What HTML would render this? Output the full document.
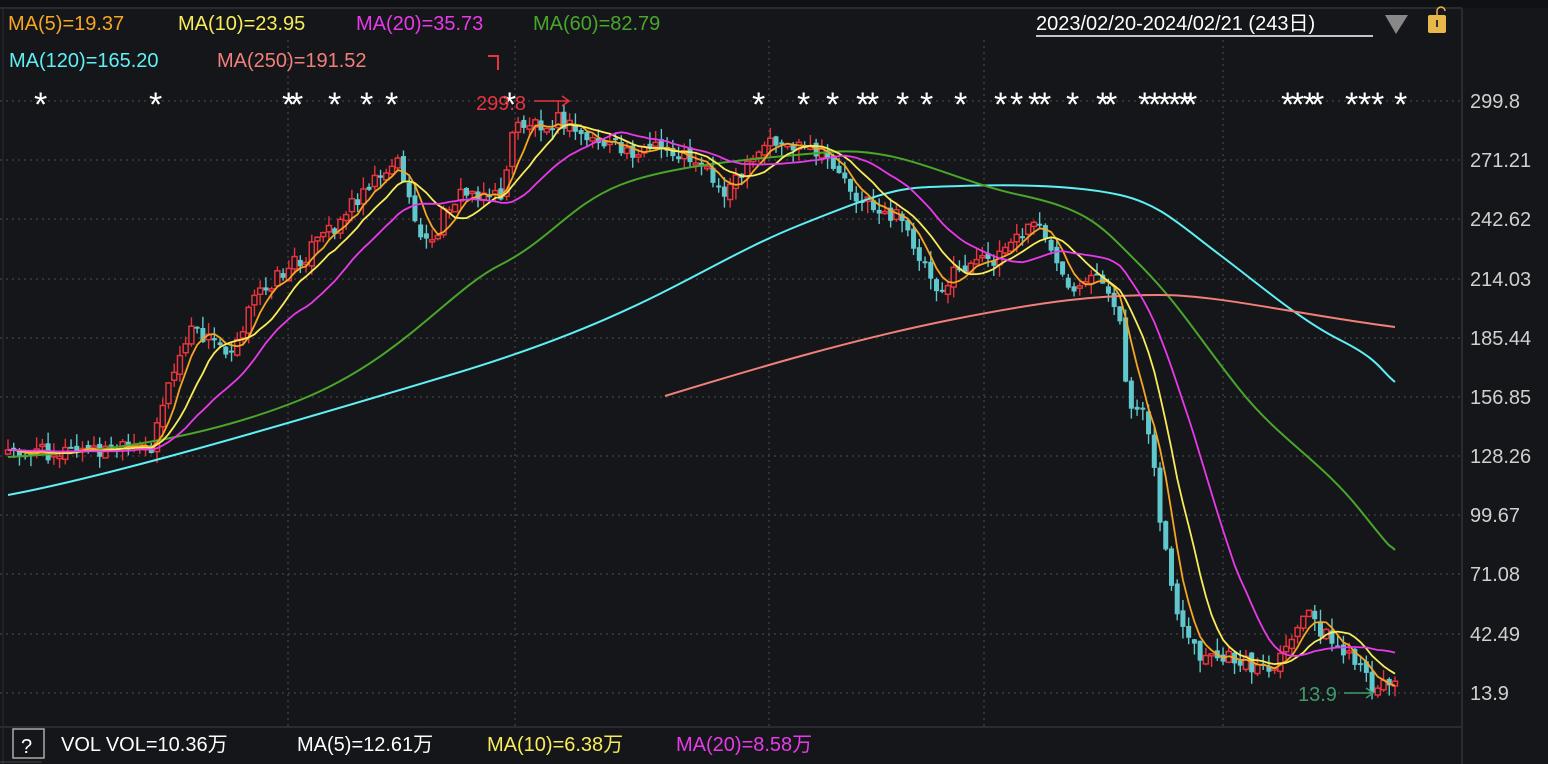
<!DOCTYPE html>
<html><head><meta charset="utf-8"><style>
html,body{margin:0;padding:0;background:#15161a;width:1548px;height:764px;overflow:hidden}
svg{display:block;font-family:"Liberation Sans","Noto Sans CJK SC",sans-serif}
</style></head><body>
<svg id="s" width="1548" height="764" viewBox="0 0 1548 764">
<rect width="1548" height="764" fill="#15161a"/>
<rect x="0" y="0" width="1548" height="8" fill="#101114"/>
<line x1="0" y1="8" x2="1462" y2="8" stroke="#2a2b30" stroke-width="2"/>
<line x1="1462" y1="8" x2="1462" y2="764" stroke="#2a2b30" stroke-width="2"/>
<line x1="0" y1="727" x2="1462" y2="727" stroke="#2a2b30" stroke-width="2"/>
<line x1="3" y1="8" x2="3" y2="764" stroke="#2a2b30" stroke-width="1"/>
<g stroke="#3a3b40" stroke-width="1.5" stroke-dasharray="2,4">
<line x1="0" y1="101" x2="1462" y2="101"/><line x1="0" y1="160" x2="1462" y2="160"/>
<line x1="0" y1="219" x2="1462" y2="219"/><line x1="0" y1="279" x2="1462" y2="279"/>
<line x1="0" y1="338" x2="1462" y2="338"/><line x1="0" y1="397" x2="1462" y2="397"/>
<line x1="0" y1="456" x2="1462" y2="456"/><line x1="0" y1="515" x2="1462" y2="515"/>
<line x1="0" y1="574" x2="1462" y2="574"/><line x1="0" y1="634" x2="1462" y2="634"/>
<line x1="0" y1="693" x2="1462" y2="693"/>
<line x1="288" y1="40" x2="288" y2="727"/><line x1="515" y1="40" x2="515" y2="727"/>
<line x1="769" y1="40" x2="769" y2="727"/><line x1="984" y1="40" x2="984" y2="727"/>
<line x1="1223" y1="40" x2="1223" y2="727"/>
</g>
<g id="candles"></g>
<g fill="none" stroke-width="2" stroke-linejoin="round">
<path stroke="#5ff0f5" d="M8,495 C100,478 250,435 450,375 S700,265 800,225 S900,188 960,186 S1080,186 1120,195 S1180,225 1220,255 S1300,320 1340,340 S1380,370 1395,382"/>
<path stroke="#4aa62a" d="M8,457 C100,452 200,440 300,400 S450,290 500,265 S570,205 620,185 S760,158 830,152 S950,180 1020,195 S1100,225 1140,265 S1200,340 1240,390 S1320,460 1360,510 S1385,540 1395,550"/>
<path stroke="#f08078" d="M665,396 C750,370 850,340 950,320 S1100,295 1160,295 S1300,315 1395,327"/>
</g>
<g id="mas" fill="none" stroke-width="1.8" stroke-linejoin="round"></g>
<g font-size="20">
<text x="8" y="30" fill="#f5a623">MA(5)=19.37</text>
<text x="178" y="30" fill="#f8ec5a">MA(10)=23.95</text>
<text x="356" y="30" fill="#e83ae8">MA(20)=35.73</text>
<text x="533" y="30" fill="#4aa62a">MA(60)=82.79</text>
<text x="9" y="67" fill="#5ff0f5">MA(120)=165.20</text>
<text x="217" y="67" fill="#f08078">MA(250)=191.52</text>
<text x="1036" y="30" fill="#fff">2023/02/20-2024/02/21 (243日)</text>
</g>
<line x1="1036" y1="36" x2="1373" y2="36" stroke="#fff" stroke-width="1.5"/>
<polygon points="1385,15 1408,15 1396,34" fill="#888"/>
<rect x="1428" y="15" width="18" height="18" rx="2" fill="#e8b84a"/>
<path d="M1437,15 v-4 a4,4 0 0 1 8,0" stroke="#e8b84a" stroke-width="1.5" fill="none"/>
<rect x="1436" y="20" width="2" height="7" fill="#333"/>
<g font-size="20" fill="#d0d0d0">
<text x="1470" y="108">299.8</text><text x="1470" y="167">271.21</text>
<text x="1470" y="226">242.62</text><text x="1470" y="286">214.03</text>
<text x="1470" y="345">185.44</text><text x="1470" y="404">156.85</text>
<text x="1470" y="463">128.26</text><text x="1470" y="522">99.67</text>
<text x="1470" y="581">71.08</text><text x="1470" y="641">42.49</text>
<text x="1470" y="700">13.9</text>
</g>
<g font-size="34" fill="#fff" id="stars"></g>
<text x="476" y="110" font-size="20" fill="#e8343d">299.8</text>
<path d="M534,101 H568 M562,96 L569,101 L562,106" stroke="#e8343d" stroke-width="1.5" fill="none"/>
<path d="M488,56 H498 V70" stroke="#e8343d" stroke-width="2" fill="none"/>
<text x="1298" y="701" font-size="20" fill="#3f9a6a">13.9</text>
<path d="M1344,693 H1372 M1366,688 L1373,693 L1366,698" stroke="#3f9a6a" stroke-width="1.5" fill="none"/>
<rect x="13" y="729" width="31" height="29" fill="none" stroke="#aaa" stroke-width="1.5"/>
<text x="21" y="753" font-size="20" fill="#fff">?</text>
<line x1="0" y1="762" x2="42" y2="762" stroke="#444" stroke-width="1"/>
<g font-size="20">
<text x="61" y="751" fill="#fff">VOL  VOL=10.36万</text>
<text x="297" y="751" fill="#fff">MA(5)=12.61万</text>
<text x="487" y="751" fill="#f8ec5a">MA(10)=6.38万</text>
<text x="676" y="751" fill="#e83ae8">MA(20)=8.58万</text>
</g>
</svg>
<script>
(function(){
var NS="http://www.w3.org/2000/svg";
var K=[[8,452],[150,450],[160,410],[190,330],[230,350],[260,290],[300,260],[340,220],[370,180],[400,160],[410,210],[430,250],[450,200],[480,190],[500,200],[515,125],[560,120],[580,135],[620,150],[660,150],[700,160],[720,190],[740,180],[770,140],[800,150],[830,160],[860,200],[900,220],[940,290],[960,270],[990,260],[1040,220],[1060,280],[1075,300],[1100,270],[1120,330],[1130,410],[1145,400],[1160,520],[1180,630],[1200,660],[1240,660],[1275,675],[1290,640],[1310,615],[1330,640],[1350,660],[1370,685],[1395,683]];
function f(x){for(var i=1;i<K.length;i++){if(x<=K[i][0]){var a=K[i-1],b=K[i];return a[1]+(b[1]-a[1])*(x-a[0])/(b[0]-a[0]);}}return K[K.length-1][1];}
function r(i){var v=Math.sin(i*12.9898+4.1)*43758.5453;return v-Math.floor(v);}
var g=document.getElementById("candles"),N=243,cl=[],xs=[];
var prev=f(8);
for(var i=0;i<N;i++){
 var x=8+i*(1387/(N-1));xs.push(x);
 var c=f(x)+(r(i)-0.5)*18;cl.push(c);
 var o=prev+(r(i+500)-0.5)*8;
 var hi=Math.min(o,c)-r(i+900)*12,lo=Math.max(o,c)+r(i+1300)*12;
 var up=c<o;var col=up?"#e8343d":"#5fc8cc";
 var l=document.createElementNS(NS,"line");
 l.setAttribute("x1",x);l.setAttribute("x2",x);l.setAttribute("y1",hi);l.setAttribute("y2",lo);
 l.setAttribute("stroke",col);l.setAttribute("stroke-width","1.4");g.appendChild(l);
 var rc=document.createElementNS(NS,"rect");
 var t=Math.min(o,c),h=Math.max(2,Math.abs(o-c));
 rc.setAttribute("x",x-2.5);rc.setAttribute("y",t);rc.setAttribute("width",5);rc.setAttribute("height",h);
 if(up){rc.setAttribute("fill","#15161a");rc.setAttribute("stroke",col);rc.setAttribute("stroke-width","1.5");}
 else rc.setAttribute("fill",col);
 g.appendChild(rc);prev=c;
}
var m=document.getElementById("mas");
[[5,"#f5a623"],[10,"#f8ec5a"],[20,"#e83ae8"]].forEach(function(p){
 var pts=[];for(var i=0;i<N;i++){var s=0;for(var j=0;j<p[0];j++){s+=cl[Math.max(0,i-j)];}pts.push(xs[i].toFixed(1)+","+(s/p[0]).toFixed(1));}
 var pl=document.createElementNS(NS,"polyline");pl.setAttribute("points",pts.join(" "));pl.setAttribute("stroke",p[1]);m.appendChild(pl);
});
var st=document.getElementById("stars"),sx=[36,151,284,292,330,362,387,505,754,799,828,858,868,898,922,956,996,1012,1030,1040,1068,1098,1106,1140,1150,1160,1170,1180,1186,1283,1293,1305,1313,1347,1360,1373,1396];
sx.forEach(function(x){var t=document.createElementNS(NS,"text");t.setAttribute("x",x-2);t.setAttribute("y",116);t.textContent="*";st.appendChild(t);});
})();
</script>
</body></html>
